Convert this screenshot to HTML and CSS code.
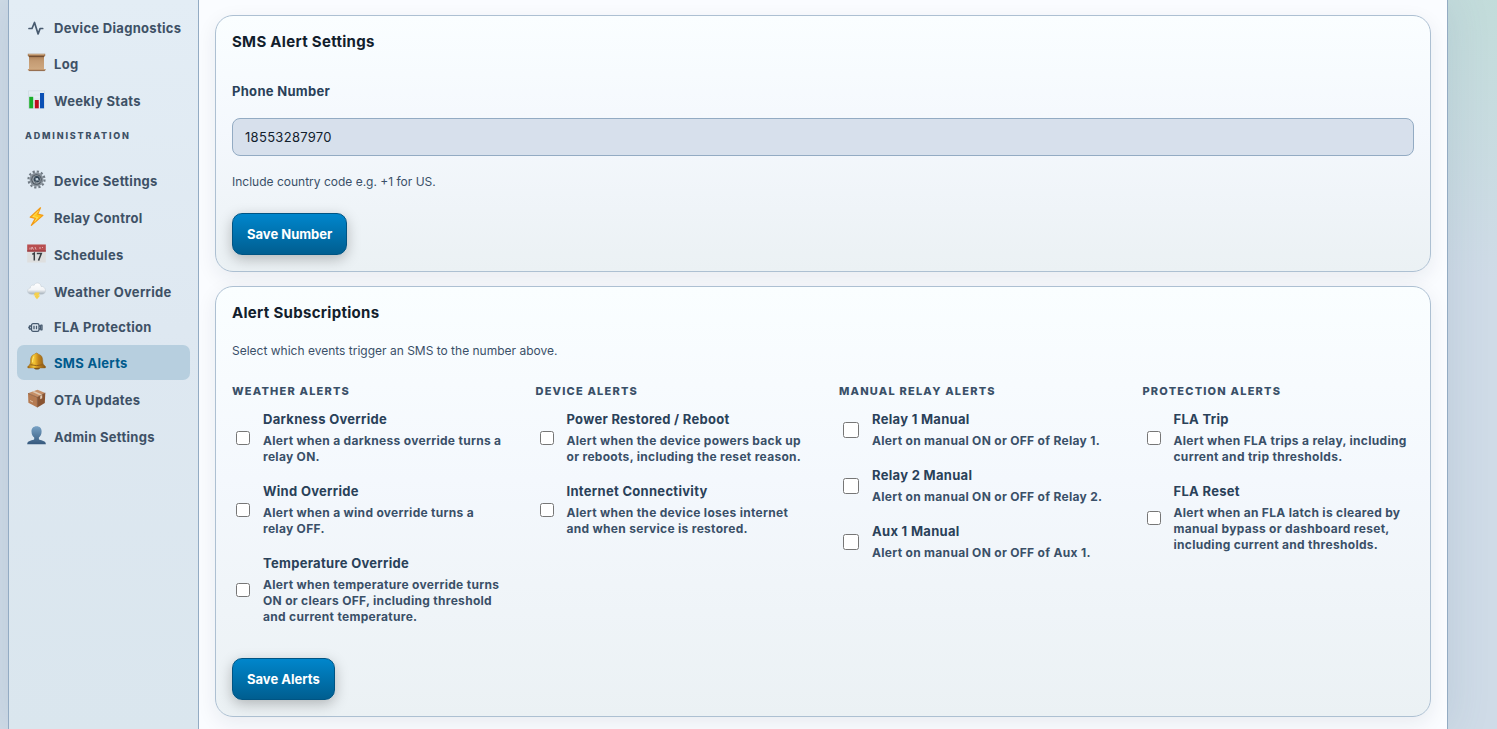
FILE: index.html
```html
<!DOCTYPE html>
<html lang="en">
<head>
<meta charset="utf-8">
<meta name="viewport" content="width=device-width, initial-scale=1">
<title>SMS Alerts</title>
<link rel="stylesheet" href="styles.css">
</head>
<body>
<div class="shell">
  <nav class="sidebar" aria-label="Main">
    <a class="nav-item nav-item-line" href="#diagnostics">
      <svg class="icon" viewBox="0 0 19 19" fill="none" stroke="#475a6f" stroke-width="1.700" stroke-linecap="round" stroke-linejoin="round"><path d="M2 9.500h3L7.500 3.500l3.600 11.500 2-5.500h2.600"/></svg>
      Device Diagnostics</a>
    <a class="nav-item" href="#log">
      <svg class="icon" viewBox="0 0 19 19"><defs><linearGradient id="paper" x2="0" y2="1"><stop stop-color="#a97a50"/><stop offset=".4" stop-color="#c39a72"/><stop offset="1" stop-color="#cfa981"/></linearGradient></defs><path d="M2 2h15v14.500H2z" fill="url(#paper)"/><path d="M.8.8h17.400v1.500q0 1.500-1.500 1.500H2.300Q.8 3.800.8 2.300z" fill="#a0754e"/><path d="M1.500 1h16v1h-16z" fill="#c8a580"/><path d="M2 3.200h15v.9H2z" fill="#66452d"/><path d="M1.300 16h16.200q1 0 1 .8t-1 .9H2q-1.200 0-1.200-.8t.5-.9z" fill="#c49a71"/><path d="M2 17.600h15.500l1-1" stroke="#83583a" stroke-width=".8" fill="none"/></svg>
      Log</a>
    <a class="nav-item" href="#stats">
      <svg class="icon" viewBox="0 0 19 19"><path d="M1.500.800h16v17.500h-16z" fill="#e4edf3" stroke="#cbd7df" stroke-width=".6"/><path d="M2 5h15M2 9h15M2 13h15" stroke="#cfdbe3" stroke-width=".5"/><path d="M2.200 6.800h4v11.500h-4z" fill="#18ae28"/><path d="M7.800 10h4v8.300h-4z" fill="#bd101d"/><path d="M13 3h4v15.300h-4z" fill="#0b50b5"/></svg>
      Weekly Stats</a>
    <h2 class="nav-heading">Administration</h2>
    <a class="nav-item" href="#device">
      <svg class="icon" viewBox="0 0 19 19"><circle cx="9.500" cy="9.500" r="8" fill="none" stroke="#717b84" stroke-width="2.200" stroke-dasharray="2.200 1.990"/><circle cx="9.500" cy="9.500" r="6.900" fill="#87919a"/><circle cx="9.500" cy="9.500" r="5.200" fill="#4c555e"/><circle cx="9.500" cy="9.500" r="4.200" fill="#98a2aa"/><circle cx="9.800" cy="9.200" r="3.100" fill="#344656"/><path d="M9.500 9.500 6 5.500M9.500 9.500l4.600 2.300M9.500 9.500 8 14" stroke="#6f7a83" stroke-width="1"/><circle cx="10" cy="9.300" r="1.300" fill="#c5d4df"/></svg>
      Device Settings</a>
    <a class="nav-item" href="#relay">
      <svg class="icon" viewBox="0 0 19 19"><path d="M13.500.8 3.200 10.200l5.100 1.200-3.900 7L15.900 8.400l-5.200-1.300z" fill="#ffc61c" stroke="#f29b17" stroke-width="1.200" stroke-linejoin="round"/><path d="M11.800 3.600 6 9.500l4.500 1-2.600 4" fill="none" stroke="#ffe46a" stroke-width=".8"/></svg>
      Relay Control</a>
    <a class="nav-item" href="#schedules">
      <svg class="icon" viewBox="0 0 19 19"><path d="M.2.500h18.600v18H.2z" fill="#dedfdf"/><path d="M.2.500h18.600v7H.2z" fill="#b84f51"/><path d="M.2 6.400h18.600v1.200H.2z" fill="#963d42"/><path d="M3 5.500V3.600M4.500 5.500 5 3l1.500 2.500M8 3l1 2.500M12 4h2M15.500 3v1" stroke="#e9c7c8" stroke-width=".8" fill="none"/><path d="m5.300 10.400 2-1.300v7.500M9.800 9.500h4.500l-2.800 7.100" fill="none" stroke="#393e43" stroke-width="1.500"/></svg>
      Schedules</a>
    <a class="nav-item" href="#weather">
      <svg class="icon" viewBox="0 0 19 19"><defs><linearGradient id="cloud" x2="0" y2="1"><stop stop-color="#fff"/><stop offset=".6" stop-color="#f3f5f7"/><stop offset="1" stop-color="#a3afb9"/></linearGradient></defs><path d="M4.500 13.300C-.5 13.300-.6 7.600 3.300 7.100 3.100 4 6.300 3.700 7 4.500 8 .9 14 1.200 14 5.400c5.400-.2 6.200 7.700.8 7.900z" fill="url(#cloud)" stroke="#c1cbd3" stroke-width=".5"/><path d="M8 11.500 6.600 14.500h2L7.600 15.500 10 18.300l3.200-3.800h-1.700l1.200-3z" fill="#f5d04d"/></svg>
      Weather Override</a>
    <a class="nav-item nav-item-line" href="#fla">
      <svg class="icon" viewBox="0 0 19 19" fill="none" stroke="#475a6f" stroke-width="1.300" stroke-linejoin="round"><rect x="4.500" y="5.700" width="7.500" height="7.600" rx="1.600"/><path d="M7 7.800v3.400M9.500 7.800v3.400M4.500 8h-2v3h2M1.200 9.500h1.300M12 8h1.500v3H12M13.500 7.200H15v4.600h-1.500"/></svg>
      FLA Protection</a>
    <a class="nav-item nav-item-active" href="#sms" aria-current="page">
      <svg class="icon" viewBox="0 0 19 19"><defs><linearGradient id="bell"><stop stop-color="#9d6511"/><stop offset=".35" stop-color="#f7c834"/><stop offset=".6" stop-color="#c5861b"/><stop offset="1" stop-color="#805419"/></linearGradient></defs><ellipse cx="10" cy="15.700" rx="3" ry="1.800" fill="#795018"/><path d="M7.500 2.200Q9.500-.4 11.500 2.200c3.600 1 4.300 3.900 4.300 7.600 0 2 .8 3 2.300 4.200.9.600.9 2-.3 2H1.700c-1.500 0-1.300-1.400-.4-2 1.600-1.300 2.200-2.600 2.200-4.400 0-3.500.5-6.400 4-7.400z" fill="url(#bell)" stroke="#94621a" stroke-width=".4"/><path d="M3.500 12.700q6 1.800 12.300 0" stroke="#89591b" stroke-width=".9" fill="none"/><path d="M6.700 4.600q-1.200 2-1.200 6" stroke="#ffe46c" stroke-width="1.100" fill="none"/></svg>
      SMS Alerts</a>
    <a class="nav-item" href="#ota">
      <svg class="icon" viewBox="0 0 19 19"><path d="M1 4.300 10.500.700 18.300 4l-7.900 4.300z" fill="#c58e66"/><path d="m1 4.300 9.400 4V18.500L1.400 13.800z" fill="#b57b52"/><path d="M10.400 8.300 18.300 4l-.5 10-7.400 4.500z" fill="#895432"/><path d="m5 2.800 2-.8 8.200 3.500v3.800l-2 1V6.600z" fill="#dfc8b1"/><path d="m1 4.300 9.400 4L18.300 4M10.400 8.300v10" fill="none" stroke="#714429" stroke-width=".5"/><path d="m3 11.500 3 1.500" stroke="#dfc0a3"/></svg>
      OTA Updates</a>
    <a class="nav-item" href="#admin">
      <svg class="icon" viewBox="0 0 19 19"><defs><linearGradient id="person" x2="0" y2="1"><stop stop-color="#78a2c5"/><stop offset="1" stop-color="#36597d"/></linearGradient></defs><path d="M9.600.3c3.300 0 5.200 2.200 5 5.500-.1 2.700-1.200 4.600-2.700 5.700v1.800c1.100 1.400 6.900.7 7 4.900H.200c.1-4.200 6-3.500 7-4.900v-1.800C5.600 10.400 4.600 8.500 4.500 5.800 4.300 2.500 6.300.3 9.600.3z" fill="url(#person)"/></svg>
      Admin Settings</a>
  </nav>

  <main class="main">
    <form class="card">
      <h1 class="card-title">SMS Alert Settings</h1>
      <label class="field-label" for="phone">Phone Number</label>
      <input class="field-input" id="phone" type="tel" value="18553287970">
      <p class="hint">Include country code e.g. +1 for US.</p>
      <button class="button" type="button">Save Number</button>
    </form>

    <form class="card">
      <h1 class="card-title">Alert Subscriptions</h1>
      <p class="intro">Select which events trigger an SMS to the number above.</p>
      <div class="groups">
        <section class="group">
          <h2 class="group-title">Weather Alerts</h2>
          <label class="option"><input class="check" type="checkbox"><span class="option-text"><span>Darkness Override</span><span class="option-note">Alert when a darkness override turns a relay ON.</span></span></label>
          <label class="option"><input class="check" type="checkbox"><span class="option-text"><span>Wind Override</span><span class="option-note">Alert when a wind override turns a relay OFF.</span></span></label>
          <label class="option"><input class="check" type="checkbox"><span class="option-text"><span>Temperature Override</span><span class="option-note">Alert when temperature override turns ON or clears OFF, including threshold and current temperature.</span></span></label>
        </section>
        <section class="group">
          <h2 class="group-title">Device Alerts</h2>
          <label class="option"><input class="check" type="checkbox"><span class="option-text"><span>Power Restored / Reboot</span><span class="option-note">Alert when the device powers back up or reboots, including the reset reason.</span></span></label>
          <label class="option"><input class="check" type="checkbox"><span class="option-text"><span>Internet Connectivity</span><span class="option-note">Alert when the device loses internet and when service is restored.</span></span></label>
        </section>
        <section class="group group-large">
          <h2 class="group-title">Manual Relay Alerts</h2>
          <label class="option"><input class="check" type="checkbox"><span class="option-text"><span>Relay 1 Manual</span><span class="option-note">Alert on manual ON or OFF of Relay 1.</span></span></label>
          <label class="option"><input class="check" type="checkbox"><span class="option-text"><span>Relay 2 Manual</span><span class="option-note">Alert on manual ON or OFF of Relay 2.</span></span></label>
          <label class="option"><input class="check" type="checkbox"><span class="option-text"><span>Aux 1 Manual</span><span class="option-note">Alert on manual ON or OFF of Aux 1.</span></span></label>
        </section>
        <section class="group">
          <h2 class="group-title">Protection Alerts</h2>
          <label class="option"><input class="check" type="checkbox"><span class="option-text"><span>FLA Trip</span><span class="option-note">Alert when FLA trips a relay, including current and trip thresholds.</span></span></label>
          <label class="option"><input class="check" type="checkbox"><span class="option-text"><span>FLA Reset</span><span class="option-note">Alert when an FLA latch is cleared by manual bypass or dashboard reset, including current and thresholds.</span></span></label>
        </section>
      </div>
      <button class="button" type="button">Save Alerts</button>
    </form>
  </main>
</div>
</body>
</html>
```
FILE: styles.css
```css
* {
  box-sizing: border-box;
}

body {
  margin: 0;
  padding: 0 49px 0 8px;
  font-family: Inter, "Liberation Sans", sans-serif;
  font-size: 13px;
  color: #2a4159;
  background:
    radial-gradient(circle at 100% 0, #c2dcda, rgba(194, 220, 218, 0) 280px),
    #cfdbe7;
}

h1,
h2,
p {
  margin: 0;
}

.shell {
  display: flex;
  min-height: 100vh;
  border: solid #93abc3;
  border-width: 0 1px;
  box-shadow: 0 0 40px rgba(71, 110, 140, 0.15);
}

.sidebar {
  flex: 0 0 190px;
  display: flex;
  flex-direction: column;
  gap: 2px;
  padding: 12px 8px;
  border-right: 1px solid #93abc3;
  background: linear-gradient(#e3edf5, #dee8f1 45%, #dae6ee);
}

.nav-item {
  display: flex;
  align-items: center;
  gap: 8px;
  height: 35px;
  padding: 0 8px 0 10px;
  border-radius: 7px;
  color: #3e5166;
  font-weight: 700;
  letter-spacing: 0.3px;
  white-space: nowrap;
  text-decoration: none;
}

.nav-item-line {
  height: 32px;
}

.nav-item-active {
  color: #005a8c;
  background: #b7cfdf;
}

.icon {
  flex: none;
  width: 19px;
  height: 19px;
  margin-bottom: 3px;
}

.nav-item-line .icon {
  margin-bottom: 0;
}

.nav-heading {
  height: 41px;
  padding: 10px 8px 0;
  font-size: 9px;
  line-height: 12px;
  font-weight: 800;
  letter-spacing: 1.8px;
  text-transform: uppercase;
  color: #3e5166;
}

.main {
  flex: 1;
  min-width: 0;
  display: flex;
  flex-direction: column;
  gap: 14px;
  padding: 15px 16px 12px;
  background: #fafcff;
}

.card {
  display: flex;
  flex-direction: column;
  align-items: flex-start;
  padding: 16px;
  border: 1px solid #adc0d2;
  border-radius: 18px;
  background: linear-gradient(#fafeff, #f4f8fd 45%, #ebf1f4);
  box-shadow: 0 6px 20px rgba(20, 40, 60, 0.08);
}

.card-title {
  font-size: 15px;
  line-height: 20px;
  font-weight: 700;
  letter-spacing: 0.3px;
  color: #12202c;
}

.field-label {
  margin-top: 31px;
  line-height: 16px;
  font-weight: 700;
  letter-spacing: 0.3px;
}

.field-input {
  width: 100%;
  height: 38px;
  margin-top: 19px;
  padding: 0 12px;
  border: 1px solid #93abc3;
  border-radius: 8px;
  background: #d7e0ec;
  color: #12202c;
  font: inherit;
  letter-spacing: 0.3px;
}

.hint,
.intro {
  font-size: 12px;
  line-height: 16px;
  color: #3a5068;
}

.hint {
  margin: 18px 0 23px;
}

.intro {
  margin-top: 20px;
}

.button {
  height: 42px;
  padding: 0 14px;
  border: 1px solid #005483;
  border-radius: 10px;
  background: linear-gradient(#0086cc, #005e90);
  box-shadow: 0 4px 14px rgba(0, 0, 0, 0.25);
  color: #fff;
  font: inherit;
  font-weight: 700;
}

.groups {
  display: grid;
  grid-template-columns: repeat(4, 1fr);
  gap: 32px;
  width: 100%;
  margin: 24px 0 33px;
}

.group {
  display: flex;
  flex-direction: column;
  gap: 18px;
}

.group-title {
  margin-bottom: -6px;
  font-size: 11px;
  line-height: 16px;
  font-weight: 800;
  letter-spacing: 1.2px;
  text-transform: uppercase;
  color: #3a5068;
}

.option {
  display: flex;
  align-items: center;
  gap: 10px;
  font-weight: 700;
  letter-spacing: 0.3px;
}

.check {
  flex: none;
  width: 14px;
  height: 14px;
  margin: 0 3px 0 4px;
}

.group-large .check {
  width: 16px;
  height: 16px;
}

.option-text {
  display: flex;
  flex-direction: column;
  gap: 6px;
  line-height: 16px;
}

.option-note {
  font-size: 12px;
  color: #3a5068;
}
```
